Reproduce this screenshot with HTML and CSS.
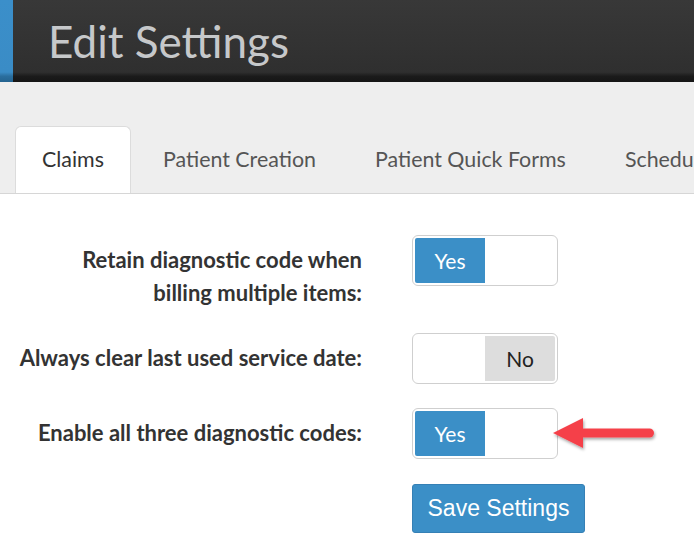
FILE: index.html
```html
<!DOCTYPE html>
<html>
<head>
<meta charset="utf-8">
<link rel="stylesheet" href="styles.css">
</head>
<body>
<header class="page-header">
  <div class="accent"></div>
  <h1 class="title">Edit Settings</h1>
</header>
<nav class="tabbar">
  <ul class="tabs">
    <li class="tab active">Claims</li>
    <li class="tab">Patient Creation</li>
    <li class="tab">Patient Quick Forms</li>
    <li class="tab">Scheduler</li>
  </ul>
</nav>
<main class="content">
  <div class="form">
    <div class="row">
      <div class="label">Retain diagnostic code when<br>billing multiple items:</div>
      <div class="toggle on"><span class="opt yes">Yes</span><span class="opt blank"></span></div>
    </div>
    <div class="row">
      <div class="label">Always clear last used service date:</div>
      <div class="toggle off"><span class="opt blank"></span><span class="opt no">No</span></div>
    </div>
    <div class="row">
      <div class="label">Enable all three diagnostic codes:</div>
      <div class="toggle on"><span class="opt yes">Yes</span><span class="opt blank"></span></div>
    </div>
    <div class="row">
      <div class="label"></div>
      <button class="save">Save Settings</button>
    </div>
  </div>
  <svg class="arrow" width="120" height="50" viewBox="0 0 120 50">
    <defs>
      <filter id="sh" x="-20%" y="-30%" width="140%" height="170%">
        <feDropShadow dx="1" dy="2" stdDeviation="1.5" flood-color="#000" flood-opacity="0.35"/>
      </filter>
    </defs>
    <g filter="url(#sh)" fill="#f5414a">
      <path d="M8 24 L38 9 L38 39 Z"/>
      <rect x="34" y="19.5" width="75" height="9" rx="4.5"/>
    </g>
  </svg>
</main>
</body>
</html>
```

FILE: styles.css
```css
* { box-sizing: border-box; }
html, body { margin: 0; padding: 0; }
body {
  width: 694px;
  height: 558px;
  overflow: hidden;
  background: #ffffff;
  font-family: "Lato", sans-serif;
  color: #333;
}
.page-header {
  height: 82px;
  display: flex;
  align-items: stretch;
  background: linear-gradient(to bottom, #383838 0%, #2f2f2f 88%, #1b1b1b 93%, #151515 100%);
}
.accent {
  width: 13px;
  background: linear-gradient(to bottom, #3b8fca 0%, #3a8cc6 88%, #2a6e9e 93%, #24638f 100%);
}
.title {
  margin: 0;
  padding-left: 35px;
  padding-top: 14px;
  font-weight: 400;
  font-size: 44px;
  color: #c6c8ca;
  line-height: 54px;
}
.tabbar {
  background: #eeeeee;
  height: 112px;
  padding-top: 44px;
  border-bottom: 1px solid #d6d6d6;
  overflow: hidden;
}
.tabs {
  list-style: none;
  margin: 0;
  padding: 0 0 0 15px;
  display: flex;
  white-space: nowrap;
  height: 67px;
}
.tab {
  flex: none;
  padding: 0 26px;
  margin-right: 5px;
  height: 67px;
  line-height: 65px;
  font-size: 21.4px;
  color: #555;
  border: 1px solid transparent;
  border-bottom: none;
  border-radius: 6px 6px 0 0;
}
.tab.active {
  background: #fff;
  color: #333;
  border-color: #dcdcdc;
  height: 68px;
}
.content {
  position: relative;
  padding-top: 41px;
}
.form {
  display: flex;
  flex-direction: column;
  gap: 24px;
}
.row {
  display: flex;
  align-items: flex-start;
}
.label {
  width: 362px;
  flex: none;
  text-align: right;
  font-size: 22px;
  font-weight: 700;
  line-height: 33px;
  padding-top: 8px;
  color: #333;
  margin-right: 50px;
}
.toggle {
  width: 146px;
  height: 51px;
  border: 1px solid #cfcfcf;
  border-radius: 6px;
  padding: 2px;
  display: flex;
}
.opt {
  flex: 1;
  display: flex;
  align-items: center;
  justify-content: center;
  font-size: 21px;
}
.opt.yes {
  background: #3b8fc7;
  color: #fff;
  border-radius: 2px 0 0 2px;
}
.opt.no {
  background: #dddddd;
  color: #222;
  border-radius: 0 2px 2px 0;
}
.save {
  margin-top: 1px;
  height: 49px;
  width: 173px;
  border: 1px solid #3580b5;
  border-radius: 3px;
  background: #3b8fc7;
  color: #fff;
  font-family: "Liberation Sans", Arial, sans-serif;
  font-size: 23px;
  padding: 0;
}
.arrow {
  position: absolute;
  left: 545px;
  top: 215px;
}
```
